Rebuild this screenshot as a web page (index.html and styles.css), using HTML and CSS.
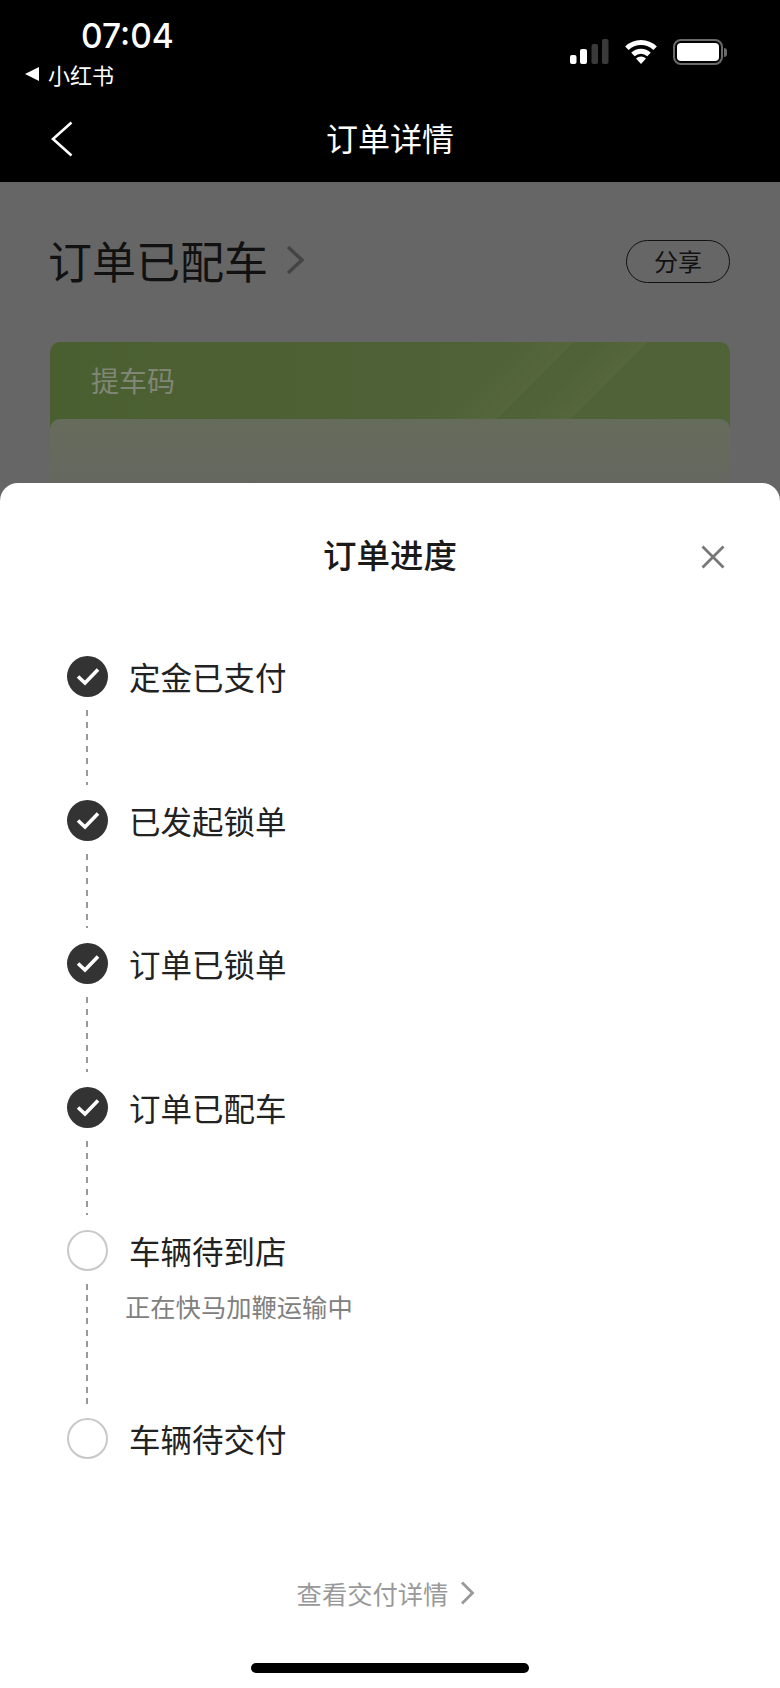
FILE: index.html
```html
<!DOCTYPE html>
<html lang="zh-CN">
<head>
<meta charset="utf-8">
<title>订单进度</title>
<link rel="stylesheet" href="styles.css">
</head>
<body>
<div class="screen">
  <header class="top">
    <div class="status">
      <div class="status-left">
        <div class="time">07:04</div>
        <div class="app-back"><span class="tri"></span><span>小红书</span></div>
      </div>
      <div class="status-right">
        <svg class="signal" width="39" height="25" viewBox="0 0 39 25"><rect x="0" y="16" width="6.5" height="9" rx="2" fill="#fff"/><rect x="10" y="10" width="7" height="15" rx="2" fill="#fff"/><rect x="21.5" y="5" width="6.5" height="20" rx="2" fill="#3a3a3a"/><rect x="32" y="0" width="6.5" height="25" rx="2" fill="#3a3a3a"/></svg>
        <svg class="wifi" width="34" height="25" viewBox="0 0 34 25"><path d="M2.9 9.3A20 20 0 0 1 31.1 9.3" fill="none" stroke="#fff" stroke-width="5"/><path d="M9 15.6A11.3 11.3 0 0 1 25 15.6" fill="none" stroke="#fff" stroke-width="5"/><path d="M17 25L12 19.5A7 7 0 0 1 22 19.5Z" fill="#fff"/></svg>
        <div class="battery"><div class="battery-body"><div class="battery-fill"></div></div><div class="battery-nub"></div></div>
      </div>
    </div>
    <nav class="nav">
      <svg class="nav-back" width="23" height="36" viewBox="0 0 23 36"><path d="M21.5 1.5L3 18L21.5 34.5" fill="none" stroke="#fff" stroke-width="2.6"/></svg>
      <div class="nav-title">订单详情</div>
    </nav>
  </header>

  <main class="behind">
    <div class="order-head">
      <div class="order-status"><span>订单已配车</span>
        <svg width="20" height="30" viewBox="0 0 20 30"><path d="M3 2L17 15L3 28" fill="none" stroke="#444" stroke-width="3.5"/></svg>
      </div>
      <div class="share">分享</div>
    </div>
    <section class="pickup">
      <div class="pickup-title">提车码</div>
      <div class="pickup-inner"></div>
    </section>
  </main>

  <section class="sheet">
    <header class="sheet-head">
      <span></span>
      <h1 class="sheet-title">订单进度</h1>
      <svg class="close" width="24" height="24" viewBox="0 0 24 24"><path d="M1.5 1.5L22.5 22.5M22.5 1.5L1.5 22.5" fill="none" stroke="#777" stroke-width="2.8"/></svg>
    </header>
    <ol class="steps">
      <li class="step">
        <div class="marker"><span class="dot done"><svg width="24" height="19" viewBox="0 0 24 19"><path d="M2 9.5L9 16L22 2.5" fill="none" stroke="#fff" stroke-width="3.6"/></svg></span><span class="line"></span></div>
        <div class="label">定金已支付</div>
      </li>
      <li class="step">
        <div class="marker"><span class="dot done"><svg width="24" height="19" viewBox="0 0 24 19"><path d="M2 9.5L9 16L22 2.5" fill="none" stroke="#fff" stroke-width="3.6"/></svg></span><span class="line"></span></div>
        <div class="label">已发起锁单</div>
      </li>
      <li class="step">
        <div class="marker"><span class="dot done"><svg width="24" height="19" viewBox="0 0 24 19"><path d="M2 9.5L9 16L22 2.5" fill="none" stroke="#fff" stroke-width="3.6"/></svg></span><span class="line"></span></div>
        <div class="label">订单已锁单</div>
      </li>
      <li class="step">
        <div class="marker"><span class="dot done"><svg width="24" height="19" viewBox="0 0 24 19"><path d="M2 9.5L9 16L22 2.5" fill="none" stroke="#fff" stroke-width="3.6"/></svg></span><span class="line"></span></div>
        <div class="label">订单已配车</div>
      </li>
      <li class="step step-tall">
        <div class="marker"><span class="dot"></span><span class="line"></span></div>
        <div class="label">车辆待到店<div class="note">正在快马加鞭运输中</div></div>
      </li>
      <li class="step step-last">
        <div class="marker"><span class="dot"></span></div>
        <div class="label">车辆待交付</div>
      </li>
    </ol>
    <footer class="sheet-foot">
      <div class="more"><span>查看交付详情</span>
        <svg width="15" height="24" viewBox="0 0 15 24"><path d="M2 1.5L12.5 12L2 22.5" fill="none" stroke="#999" stroke-width="2.8"/></svg>
      </div>
      <div class="home-bar"></div>
    </footer>
  </section>
</div>
</body>
</html>
```

FILE: styles.css
```css
* { box-sizing: border-box; }
html, body { margin: 0; padding: 0; }
body {
  width: 780px;
  height: 1688px;
  overflow: hidden;
  font-family: "Noto Sans CJK SC", "Noto Sans", sans-serif;
  background: #666;
}
.screen { width: 780px; height: 1688px; display: flex; flex-direction: column; }

/* top bars */
.top { height: 182px; background: #000; color: #fff; flex: none; }
.status { height: 104px; display: flex; justify-content: space-between; }
.status-left { padding: 16px 0 0 25px; }
.time {
  font-family: Inter, "Liberation Sans", sans-serif;
  font-size: 33.5px;
  font-weight: 500;
  line-height: 40px;
  margin-left: 56px;
}
.app-back { display: flex; align-items: center; gap: 9px; font-size: 22px; line-height: 32px; margin-top: 2px; }
.tri { width: 0; height: 0; border-style: solid; border-width: 7px 14px 7px 0; border-color: transparent #fff transparent transparent; }
.status-right { display: flex; align-items: flex-start; padding: 39px 53px 0 0; }
.signal { margin-right: 15px; }
.wifi { margin-right: 15px; }
.battery { display: flex; align-items: center; }
.battery-body { width: 50px; height: 26px; border: 2px solid #6a6a6a; border-radius: 8px; padding: 2px; }
.battery-fill { width: 100%; height: 100%; background: #fff; border-radius: 4px; }
.battery-nub { width: 3px; height: 9px; background: #6a6a6a; border-radius: 0 3px 3px 0; margin-left: 1px; }
.nav { height: 78px; display: grid; grid-template-columns: 1fr auto 1fr; align-items: center; padding: 0 0 8px 50px; }
.nav-back { grid-column: 1; }
.nav-title { grid-column: 2; font-size: 32px; line-height: 44px; margin: -4px 0 0 -50px; }

/* dimmed page */
.behind { height: 301px; flex: none; overflow: hidden; padding: 56px 50px 0; background: #666; }
.order-head { display: flex; justify-content: space-between; align-items: center; height: 44px; }
.order-status { display: flex; align-items: center; gap: 17px; font-size: 44px; line-height: 44px; color: #111; margin-left: -2px; }
.share {
  width: 104px;
  height: 43px;
  margin-top: 2px;
  border: 1.5px solid #111;
  border-radius: 22px;
  text-align: center;
  font-size: 24px;
  line-height: 40px;
  color: #111;
}
.pickup {
  margin-top: 60px;
  height: 300px;
  border-radius: 10px;
  padding-top: 20px;
  background:
    linear-gradient(135deg, transparent 385px, rgba(255,255,255,.03) 422px, transparent 423px) 0 0 / 100% 77px no-repeat,
    linear-gradient(135deg, transparent 320px, rgba(255,255,255,.03) 370px, transparent 371px) 0 0 / 100% 77px no-repeat,
    linear-gradient(90deg, #4a5f30 0%, #4f6136 50%, #506237 100%);
}
.pickup-title { padding-left: 41px; font-size: 28px; line-height: 36px; color: #808676; }
.pickup-inner {
  margin-top: 21px;
  height: 300px;
  border-radius: 10px;
  background: linear-gradient(180deg, #666c5b 0, #656a5d 30px, #65675f 64px);
}

/* sheet */
.sheet { flex: 1; background: #fff; border-radius: 18px 18px 0 0; display: flex; flex-direction: column; }
.sheet-head {
  display: grid;
  grid-template-columns: 1fr auto 1fr;
  align-items: center;
  align-content: start;
  padding-top: 48px;
  height: 173px;
}
.sheet-title { margin: 0; font-size: 33.5px; font-weight: 500; line-height: 46px; color: #1a1a1a; }
.close { justify-self: end; margin: 6px 55px 0 0; }
.steps { list-style: none; margin: 0; padding: 0 0 0 67px; }
.step { height: 143.6px; display: flex; gap: 21px; }
.step-tall { height: 188px; }
.step-tall .line {
  margin-bottom: 14px;
  background: repeating-linear-gradient(180deg, #999 0, #999 6px, transparent 6px, transparent 11.4px);
}
.step-last { height: 41px; }
.marker { width: 41px; display: flex; flex-direction: column; }
.dot {
  width: 41px;
  height: 41px;
  flex: none;
  border-radius: 50%;
  border: 2px solid #c8c8c8;
  display: flex;
  align-items: center;
  justify-content: center;
}
.dot.done { background: #333; border: none; }
.line {
  flex: 1;
  width: 2px;
  margin: 13px 0 15px 19px;
  background: repeating-linear-gradient(180deg, #999 0, #999 6px, transparent 6px, transparent 12px);
}
.label { font-size: 31.5px; line-height: 46px; color: #222; margin-top: -3px; }
.note { font-size: 25.3px; line-height: 36px; color: #808080; margin: 15px 0 0 -4px; }

.sheet-foot { flex: 1; display: flex; flex-direction: column; align-items: center; }
.more { display: flex; align-items: center; gap: 12px; margin: 114px 0 0 -8px; font-size: 25.3px; line-height: 40px; color: #999; }
.home-bar { width: 278px; height: 10px; background: #000; border-radius: 5px; margin-top: 50px; }
```
